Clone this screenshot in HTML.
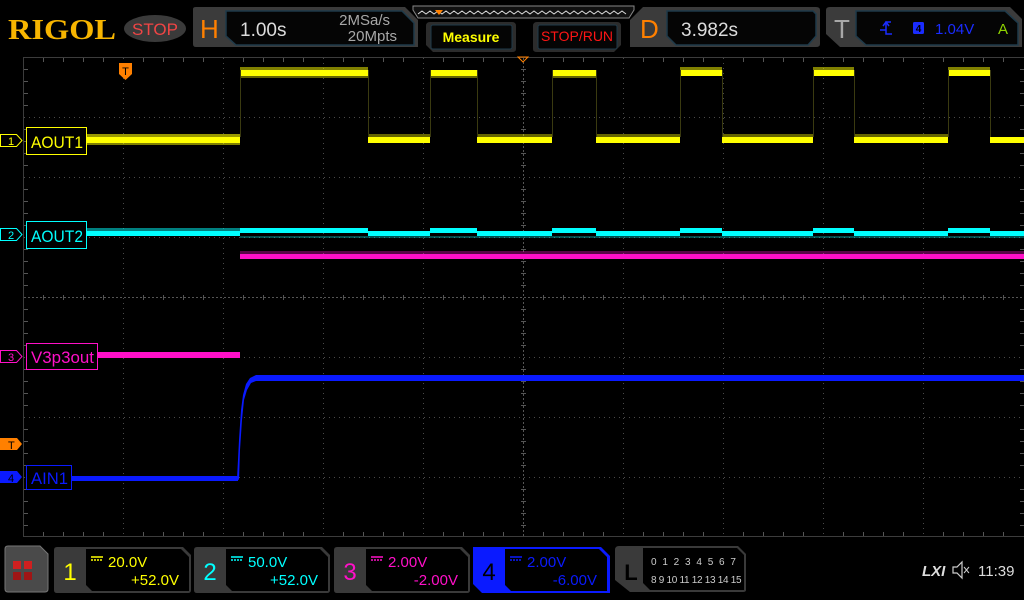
<!DOCTYPE html>
<html><head><meta charset="utf-8"><style>
html,body{margin:0;padding:0;background:#000;width:1024px;height:600px;overflow:hidden}
svg{display:block}
text{font-family:"Liberation Sans",sans-serif}
</style></head><body>
<svg width="1024" height="600" viewBox="0 0 1024 600" xmlns="http://www.w3.org/2000/svg">
<rect width="1024" height="600" fill="#000"/>
<!-- Top bar -->
<text x="8" y="39" style="font-family:'Liberation Serif',serif;font-weight:bold" font-size="29" fill="#f7b500" textLength="108" lengthAdjust="spacingAndGlyphs">RIGOL</text>
<ellipse cx="155" cy="28.5" rx="31" ry="13.5" fill="#3a3a3a"/>
<text x="155" y="35" font-size="17" fill="#f04545" text-anchor="middle">STOP</text>

<path d="M193,9 Q193,7 196,7 L405,7 L418,20 L418,47 L196,47 Q193,47 193,44 Z" fill="#3b3b3b"/>
<text x="200" y="38" font-size="26" fill="#ff8000">H</text>
<path d="M226,11 L402,11 L414,23 L414,45 L236,45 L226,36 Z" fill="#050505" stroke="#1e3a4a" stroke-width="1.5"/>
<text x="240" y="36" font-size="19" fill="#dcdcdc">1.00s</text>
<text x="390" y="25" font-size="15" fill="#a8a8a8" text-anchor="end">2MSa/s</text>
<text x="397" y="41" font-size="15" fill="#a8a8a8" text-anchor="end">20Mpts</text>

<path d="M413,6 L634,6 L634,10 L629,18 L418,18 L413,10 Z" fill="#111" stroke="#888" stroke-width="1"/>
<path d="M418,14 l4,-3 l4,3 l4,-3 l4,3 l4,-3 l4,3 l4,-3 l4,3 l4,-3 l4,3 l4,-3 l4,3 l4,-3 l4,3 l4,-3 l4,3 l4,-3 l4,3 l4,-3 l4,3 l4,-3 l4,3 l4,-3 l4,3 l4,-3 l4,3 l4,-3 l4,3 l4,-3 l4,3 l4,-3 l4,3 l4,-3 l4,3 l4,-3 l4,3 l4,-3 l4,3 l4,-3 l4,3 l4,-3 l4,3 l4,-3 l4,3 l4,-3 l4,3 l4,-3 l4,3 l4,-3 l4,3 l4,-3 l4,3" fill="none" stroke="#ddd" stroke-width="1"/>
<path d="M435,10 L443,10 L439,15 Z" fill="#ff8000"/>

<path d="M426,26 Q426,22 430,22 L512,22 Q516,22 516,26 L516,49 Q516,52 512,52 L433,52 L426,45 Z" fill="#2c2c2c"/>
<rect x="431" y="25" width="81" height="24" rx="2" fill="#050505" stroke="#1e3a4a"/>
<text x="471" y="42" font-size="14" font-weight="bold" fill="#ffff00" text-anchor="middle">Measure</text>
<path d="M533,26 Q533,22 537,22 L617,22 Q621,22 621,26 L621,45 L614,52 L537,52 Q533,52 533,49 Z" fill="#2c2c2c"/>
<rect x="538" y="25" width="79" height="24" rx="2" fill="#050505" stroke="#1e3a4a"/>
<text x="577" y="41" font-size="14" fill="#ff1515" text-anchor="middle">STOP/RUN</text>

<path d="M630,20 L643,7 L816,7 Q820,7 820,10 L820,44 Q820,47 816,47 L630,47 Z" fill="#3b3b3b"/>
<text x="640" y="38" font-size="26" fill="#ff8000">D</text>
<path d="M667,11 L813,11 L816,14 L816,36 L808,45 L676,45 L667,36 Z" fill="#050505" stroke="#1e3a4a" stroke-width="1.5"/>
<text x="681" y="36" font-size="19" fill="#dcdcdc">3.982s</text>

<path d="M826,10 Q826,7 830,7 L1010,7 L1022,19 L1022,47 L840,47 L826,34 Z" fill="#3b3b3b"/>
<text x="834" y="38" font-size="26" fill="#a8a8a8">T</text>
<path d="M856,11 L1005,11 L1018,23 L1018,45 L866,45 L856,36 Z" fill="#050505" stroke="#1e3a4a" stroke-width="1.5"/>
<path d="M880,30 L886,30 L886,22 L891,22 M883,26 L886,22 L889,26 M886,30 L886,34 L892,34" fill="none" stroke="#1a2cff" stroke-width="1.5"/>
<rect x="913" y="22" width="11" height="12" rx="1.5" fill="#1a2cff"/>
<text x="918.5" y="32" font-size="10" fill="#000" text-anchor="middle" font-weight="bold">4</text>
<text x="935" y="34" font-size="15" fill="#1a2cff">1.04V</text>
<text x="998" y="34" font-size="15" fill="#8fd400">A</text>

<!-- Grid -->
<g stroke="#3c3c3c" stroke-width="1">
<line x1="23.5" y1="57" x2="23.5" y2="537"/>
<line x1="23" y1="57.5" x2="1024" y2="57.5"/>
<line x1="23" y1="536.5" x2="1024" y2="536.5"/>
</g>
<g stroke="#4a4a4a" stroke-width="1" stroke-dasharray="1,4">
<line x1="123.5" y1="58" x2="123.5" y2="536"/><line x1="223.5" y1="58" x2="223.5" y2="536"/>
<line x1="323.5" y1="58" x2="323.5" y2="536"/><line x1="423.5" y1="58" x2="423.5" y2="536"/>
<line x1="623.5" y1="58" x2="623.5" y2="536"/><line x1="723.5" y1="58" x2="723.5" y2="536"/>
<line x1="823.5" y1="58" x2="823.5" y2="536"/><line x1="923.5" y1="58" x2="923.5" y2="536"/>
<line x1="24" y1="117.5" x2="1024" y2="117.5"/><line x1="24" y1="177.5" x2="1024" y2="177.5"/>
<line x1="24" y1="237.5" x2="1024" y2="237.5"/><line x1="24" y1="357.5" x2="1024" y2="357.5"/>
<line x1="24" y1="417.5" x2="1024" y2="417.5"/><line x1="24" y1="477.5" x2="1024" y2="477.5"/>
</g>
<g stroke="#555" stroke-width="1" stroke-dasharray="2,2">
<line x1="523.5" y1="58" x2="523.5" y2="536"/>
<line x1="24" y1="297.5" x2="1024" y2="297.5"/>
</g>
<g stroke="#555" stroke-width="1">
<path d="M43.5,58v4M63.5,58v4M83.5,58v4M103.5,58v4M143.5,58v4M163.5,58v4M183.5,58v4M203.5,58v4M243.5,58v4M263.5,58v4M283.5,58v4M303.5,58v4M343.5,58v4M363.5,58v4M383.5,58v4M403.5,58v4M443.5,58v4M463.5,58v4M483.5,58v4M503.5,58v4M543.5,58v4M563.5,58v4M583.5,58v4M603.5,58v4M643.5,58v4M663.5,58v4M683.5,58v4M703.5,58v4M743.5,58v4M763.5,58v4M783.5,58v4M803.5,58v4M843.5,58v4M863.5,58v4M883.5,58v4M903.5,58v4M943.5,58v4M963.5,58v4M983.5,58v4M1003.5,58v4"/>
<path d="M43.5,536v-4M63.5,536v-4M83.5,536v-4M103.5,536v-4M143.5,536v-4M163.5,536v-4M183.5,536v-4M203.5,536v-4M243.5,536v-4M263.5,536v-4M283.5,536v-4M303.5,536v-4M343.5,536v-4M363.5,536v-4M383.5,536v-4M403.5,536v-4M443.5,536v-4M463.5,536v-4M483.5,536v-4M503.5,536v-4M543.5,536v-4M563.5,536v-4M583.5,536v-4M603.5,536v-4M643.5,536v-4M663.5,536v-4M683.5,536v-4M703.5,536v-4M743.5,536v-4M763.5,536v-4M783.5,536v-4M803.5,536v-4M843.5,536v-4M863.5,536v-4M883.5,536v-4M903.5,536v-4M943.5,536v-4M963.5,536v-4M983.5,536v-4M1003.5,536v-4"/>
<path d="M24,69.5h4M24,81.5h4M24,93.5h4M24,105.5h4M24,129.5h4M24,141.5h4M24,153.5h4M24,165.5h4M24,189.5h4M24,201.5h4M24,213.5h4M24,225.5h4M24,249.5h4M24,261.5h4M24,273.5h4M24,285.5h4M24,309.5h4M24,321.5h4M24,333.5h4M24,345.5h4M24,369.5h4M24,381.5h4M24,393.5h4M24,405.5h4M24,429.5h4M24,441.5h4M24,453.5h4M24,465.5h4M24,489.5h4M24,501.5h4M24,513.5h4M24,525.5h4"/>
<path d="M1024,69.5h-4M1024,81.5h-4M1024,93.5h-4M1024,105.5h-4M1024,129.5h-4M1024,141.5h-4M1024,153.5h-4M1024,165.5h-4M1024,189.5h-4M1024,201.5h-4M1024,213.5h-4M1024,225.5h-4M1024,249.5h-4M1024,261.5h-4M1024,273.5h-4M1024,285.5h-4M1024,309.5h-4M1024,321.5h-4M1024,333.5h-4M1024,345.5h-4M1024,369.5h-4M1024,381.5h-4M1024,393.5h-4M1024,405.5h-4M1024,429.5h-4M1024,441.5h-4M1024,453.5h-4M1024,465.5h-4M1024,489.5h-4M1024,501.5h-4M1024,513.5h-4M1024,525.5h-4"/>
<path d="M521,69.5h5M521,81.5h5M521,93.5h5M521,105.5h5M521,129.5h5M521,141.5h5M521,153.5h5M521,165.5h5M521,189.5h5M521,201.5h5M521,213.5h5M521,225.5h5M521,249.5h5M521,261.5h5M521,273.5h5M521,285.5h5M521,309.5h5M521,321.5h5M521,333.5h5M521,345.5h5M521,369.5h5M521,381.5h5M521,393.5h5M521,405.5h5M521,429.5h5M521,441.5h5M521,453.5h5M521,465.5h5M521,489.5h5M521,501.5h5M521,513.5h5M521,525.5h5"/>
<path d="M43.5,295v5M63.5,295v5M83.5,295v5M103.5,295v5M143.5,295v5M163.5,295v5M183.5,295v5M203.5,295v5M243.5,295v5M263.5,295v5M283.5,295v5M303.5,295v5M343.5,295v5M363.5,295v5M383.5,295v5M403.5,295v5M443.5,295v5M463.5,295v5M483.5,295v5M503.5,295v5M543.5,295v5M563.5,295v5M583.5,295v5M603.5,295v5M643.5,295v5M663.5,295v5M683.5,295v5M703.5,295v5M743.5,295v5M763.5,295v5M783.5,295v5M803.5,295v5M843.5,295v5M863.5,295v5M883.5,295v5M903.5,295v5M943.5,295v5M963.5,295v5M983.5,295v5M1003.5,295v5"/>
</g>
<path d="M518,57 L528,57 L523,62 Z" fill="none" stroke="#ff8000" stroke-width="1"/>

<!-- Yellow -->
<g fill="#ffff00">
<rect x="86" y="134" width="154" height="3" opacity="0.6"/>
<rect x="86" y="137" width="154" height="6"/>
<rect x="86" y="143" width="154" height="2" opacity="0.5"/>
<rect x="240" y="70" width="128" height="6"/><rect x="240" y="67" width="128" height="3" opacity="0.5"/><rect x="240" y="76" width="128" height="2" opacity="0.4"/>
<rect x="430" y="70" width="47" height="6"/><rect x="430" y="76" width="47" height="2" opacity="0.4"/>
<rect x="552" y="70" width="44" height="6"/><rect x="552" y="76" width="44" height="2" opacity="0.4"/>
<rect x="680" y="70" width="42" height="6"/><rect x="680" y="67" width="42" height="3" opacity="0.5"/>
<rect x="813" y="70" width="41" height="6"/><rect x="813" y="67" width="41" height="3" opacity="0.5"/>
<rect x="948" y="70" width="42" height="6"/><rect x="948" y="67" width="42" height="3" opacity="0.5"/>
<rect x="368" y="137" width="62" height="6"/><rect x="368" y="134" width="62" height="3" opacity="0.4"/>
<rect x="477" y="137" width="75" height="6"/><rect x="477" y="134" width="75" height="3" opacity="0.4"/>
<rect x="596" y="137" width="84" height="6"/><rect x="596" y="134" width="84" height="3" opacity="0.4"/>
<rect x="722" y="137" width="91" height="6"/><rect x="722" y="134" width="91" height="3" opacity="0.4"/>
<rect x="854" y="137" width="94" height="6"/><rect x="854" y="134" width="94" height="3" opacity="0.4"/>
<rect x="990" y="137" width="34" height="6"/>
</g>
<g stroke="#3a3a10" stroke-width="1">
<path d="M240.5,70V137M368.5,70V137M430.5,70V137M477.5,70V137M552.5,70V137M596.5,70V137M680.5,70V137M722.5,70V137M813.5,70V137M854.5,70V137M948.5,70V137M990.5,70V137"/>
</g>
<!-- Cyan -->
<g fill="#00ffff">
<rect x="86" y="228" width="154" height="3" opacity="0.5"/>
<rect x="86" y="231" width="154" height="5"/>
<rect x="240" y="228" width="128" height="5"/><rect x="368" y="231" width="62" height="5"/>
<rect x="430" y="228" width="47" height="5"/><rect x="477" y="231" width="75" height="5"/>
<rect x="552" y="228" width="44" height="5"/><rect x="596" y="231" width="84" height="5"/>
<rect x="680" y="228" width="42" height="5"/><rect x="722" y="231" width="91" height="5"/>
<rect x="813" y="228" width="41" height="5"/><rect x="854" y="231" width="94" height="5"/>
<rect x="948" y="228" width="42" height="5"/><rect x="990" y="231" width="34" height="5"/>
<rect x="240" y="236" width="784" height="2" opacity="0.3"/>
</g>
<!-- Magenta -->
<rect x="97" y="352" width="143" height="6" fill="#ff10c8"/>
<rect x="240" y="254" width="784" height="5" fill="#ff10c8"/>
<rect x="240" y="251" width="784" height="3" fill="#ff10c8" opacity="0.35"/>
<!-- Blue -->
<path d="M70,476 L238,476 L238,481 L70,481 Z" fill="#0a1aff"/>
<path d="M237,479 L239,440 L241,410 L243,395 L246,384 L250,378 L256,375 L1024,375 L1024,381 L256,381 L251,383 L247,390 L244,400 L242,420 L240,450 L239,480 Z" fill="#0a1aff"/>

<!-- Labels -->
<path d="M0.5,134.5 L16.5,134.5 L22,140.5 L16.5,146.5 L0.5,146.5 Z" fill="#000" stroke="#ffff00"/>
<text x="8" y="145" font-size="11" fill="#ffff00">1</text>
<rect x="26.5" y="127.5" width="60" height="27" fill="#000" stroke="#ffff00"/>
<text x="31" y="148" font-size="17" fill="#ffff00" textLength="52" lengthAdjust="spacingAndGlyphs">AOUT1</text>

<path d="M0.5,228.5 L16.5,228.5 L22,234.5 L16.5,240.5 L0.5,240.5 Z" fill="#000" stroke="#00ffff"/>
<text x="8" y="239" font-size="11" fill="#00ffff">2</text>
<rect x="26.5" y="221.5" width="60" height="27" fill="#000" stroke="#00ffff"/>
<text x="31" y="242" font-size="17" fill="#00ffff" textLength="52" lengthAdjust="spacingAndGlyphs">AOUT2</text>

<path d="M0.5,350.5 L16.5,350.5 L22,356.5 L16.5,362.5 L0.5,362.5 Z" fill="#000" stroke="#ff10c8"/>
<text x="8" y="361" font-size="11" fill="#ff10c8">3</text>
<rect x="26.5" y="343.5" width="71" height="26" fill="#000" stroke="#ff10c8"/>
<text x="31" y="363" font-size="17" fill="#ff10c8" textLength="63" lengthAdjust="spacingAndGlyphs">V3p3out</text>

<path d="M0,438 L17,438 L22,444 L17,450 L0,450 Z" fill="#ff8000"/>
<text x="8" y="449" font-size="11" fill="#000">T</text>

<path d="M0,471 L17,471 L22,477 L17,483 L0,483 Z" fill="#0a1aff"/>
<text x="8" y="482" font-size="11" fill="#000">4</text>
<rect x="26.5" y="465.5" width="45" height="24" fill="#000" stroke="#0a1aff"/>
<text x="31" y="484" font-size="17" fill="#0a1aff" textLength="37" lengthAdjust="spacingAndGlyphs">AIN1</text>

<path d="M119,63 L132,63 L132,74 L125.5,80 L119,74 Z" fill="#ff8000"/>
<text x="125.5" y="75" font-size="11" fill="#000" text-anchor="middle">T</text>

<!-- Bottom bar -->
<path d="M5,549 Q5,546 8,546 L40,546 L48,554 L48,589 Q48,592 45,592 L8,592 Q5,592 5,589 Z" fill="#4a4a4a" stroke="#777"/>
<rect x="13" y="561" width="8" height="8" fill="#d02020"/><rect x="24" y="561" width="8" height="8" fill="#d02020"/>
<rect x="13" y="572" width="8" height="8" fill="#a01515"/><rect x="24" y="572" width="8" height="8" fill="#a01515"/>

<g>
<path d="M54,550 Q54,547 57,547 L183,547 L191,555 L191,590 Q191,593 188,593 L57,593 Q54,593 54,590 Z" fill="#3a3a3a"/>
<path d="M86,549 L181,549 L189,557 L189,591 L92,591 L86,585 Z" fill="#000"/>
<text x="70" y="580" font-size="24" fill="#ffff00" text-anchor="middle">1</text>
<path d="M91,557h12M91,560h2M94,560h2M97,560h2M100,560h2" stroke="#ffff00" stroke-width="1.5"/>
<text x="108" y="567" font-size="15" fill="#ffff00">20.0V</text>
<text x="179" y="585" font-size="15" fill="#ffff00" text-anchor="end">+52.0V</text>
</g>
<g>
<path d="M194,550 Q194,547 197,547 L322,547 L330,555 L330,590 Q330,593 327,593 L197,593 Q194,593 194,590 Z" fill="#3a3a3a"/>
<path d="M226,549 L320,549 L328,557 L328,591 L232,591 L226,585 Z" fill="#000"/>
<text x="210" y="580" font-size="24" fill="#00ffff" text-anchor="middle">2</text>
<path d="M231,557h12M231,560h2M234,560h2M237,560h2M240,560h2" stroke="#00ffff" stroke-width="1.5"/>
<text x="248" y="567" font-size="15" fill="#00ffff">50.0V</text>
<text x="318" y="585" font-size="15" fill="#00ffff" text-anchor="end">+52.0V</text>
</g>
<g>
<path d="M334,550 Q334,547 337,547 L462,547 L470,555 L470,590 Q470,593 467,593 L337,593 Q334,593 334,590 Z" fill="#3a3a3a"/>
<path d="M366,549 L460,549 L468,557 L468,591 L372,591 L366,585 Z" fill="#000"/>
<text x="350" y="580" font-size="24" fill="#ff10c8" text-anchor="middle">3</text>
<path d="M371,557h12M371,560h2M374,560h2M377,560h2M380,560h2" stroke="#ff10c8" stroke-width="1.5"/>
<text x="388" y="567" font-size="15" fill="#ff10c8">2.00V</text>
<text x="458" y="585" font-size="15" fill="#ff10c8" text-anchor="end">-2.00V</text>
</g>
<g>
<path d="M473,547 L601,547 L610,556 L610,593 L482,593 L473,584 Z" fill="#0a1aff"/>
<path d="M505,549 L599,549 L607,557 L607,591 L511,591 L505,585 Z" fill="#000"/>
<text x="489" y="580" font-size="24" fill="#000" text-anchor="middle">4</text>
<path d="M510,557h12M510,560h2M513,560h2M516,560h2M519,560h2" stroke="#0a1aff" stroke-width="1.5"/>
<text x="527" y="567" font-size="15" fill="#0a1aff">2.00V</text>
<text x="597" y="585" font-size="15" fill="#0a1aff" text-anchor="end">-6.00V</text>
</g>
<g>
<path d="M615,550 Q615,546 619,546 L738,546 L746,554 L746,590 Q746,592 743,592 L630,592 L615,580 Z" fill="#3a3a3a"/>
<path d="M643,548 L737,548 L744,555 L744,590 L650,590 L643,583 Z" fill="#000"/>
<text x="631" y="580" font-size="22" fill="#000" text-anchor="middle" font-weight="bold">L</text>
<text x="651" y="565" font-size="10" fill="#ccc" letter-spacing="1.5">0 1 2 3  4 5 6 7</text>
<text x="651" y="583" font-size="10" fill="#ccc" letter-spacing="-0.3">8  9 10 11  12 13 14 15</text>
</g>
<text x="922" y="576" font-size="15" font-style="italic" font-weight="bold" fill="#ddd">LXI</text>
<path d="M953,567 L957,567 L962,562 L962,578 L957,573 L953,573 Z" fill="none" stroke="#ccc" stroke-width="1.2"/>
<path d="M964,567 l5,6 M969,567 l-5,6" stroke="#ccc" stroke-width="1"/>
<text x="978" y="576" font-size="15" fill="#ddd">11:39</text>
</svg>
</body></html>
